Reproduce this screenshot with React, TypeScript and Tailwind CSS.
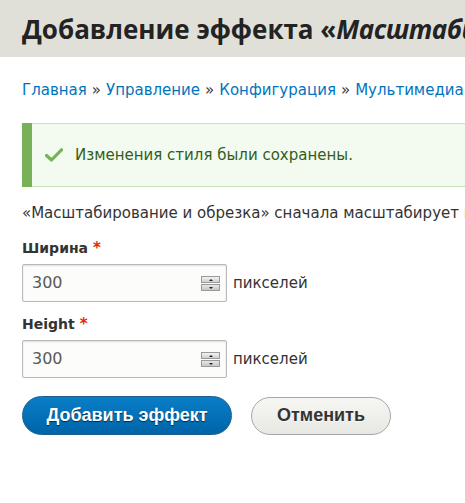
const body = "font-['DejaVu_Sans',sans-serif]";

function Spinner() {
  return (
    <div className="absolute left-[178px] top-[11px] flex h-[15px] w-[19px] flex-col gap-px">
      <div className="flex h-[7px] items-center justify-center border border-[#9a9a9a] bg-gradient-to-b from-[#f4f4f4] to-[#cfcfcf]">
        <div className="h-0 w-0 border-x-[2px] border-b-[2px] border-x-transparent border-b-[#222]" />
      </div>
      <div className="flex h-[7px] items-center justify-center border border-[#9a9a9a] bg-gradient-to-b from-[#e8e8e8] to-[#c6c6c6]">
        <div className="h-0 w-0 border-x-[2px] border-t-[2px] border-x-transparent border-t-[#222]" />
      </div>
    </div>
  );
}

function NumberField({ label }: { label: string }) {
  return (
    <div className="flex flex-col">
      <div className="flex h-[22px] items-center text-[14px] font-bold text-[#333]">
        {label}
        <span className="ml-[5px] text-[15px] text-[#e62600]">*</span>
      </div>
      <div className="mt-[5px] flex items-center">
        <div className="relative h-[38px] w-[205px] rounded-[2px] border border-[#b8b8b8] bg-[#fcfcfa] shadow-[inset_0_1px_2px_rgba(0,0,0,0.12)]">
          <div className="flex h-full items-center pl-[9px] text-[16px] text-[#595959]">300</div>
          <Spinner />
        </div>
        <span className="ml-[6px] text-[15px] text-[#333]">пикселей</span>
      </div>
    </div>
  );
}

export default function App() {
  return (
    <div className={`h-[503px] w-[465px] overflow-hidden bg-white ${body}`}>
      <header className="flex h-[57px] items-end overflow-hidden bg-[#e0e0d8] pb-[9px] pl-[22px]">
        <h1 className="whitespace-nowrap font-['Open_Sans',sans-serif] text-[26px] font-bold leading-[38px] text-[#232323]">
          Добавление эффекта «<em className="tracking-[-0.5px]">Масштабирование и обрезка</em>»
        </h1>
      </header>

      <main className="px-[22px]">
        <nav className="mt-[23px] flex h-[20px] items-center whitespace-nowrap text-[15px] text-[#0074bd]">
          Главная <span className="mx-[5px] text-[#333]">»</span> Управление{" "}
          <span className="mx-[5px] text-[#333]">»</span> Конфигурация{" "}
          <span className="mx-[5px] text-[#333]">»</span> Мультимедиа
        </nav>

        <div className="mt-[23px] flex h-[64px] w-[460px] items-center rounded-l-[2px] border border-l-0 border-[#c9e1bd] bg-[#f3faef]">
          <div className="h-[64px] w-[10px] shrink-0 bg-[#77b259]" />
          <svg className="ml-[13px] h-[14px] w-[18px]" viewBox="0 0 18 14">
            <path d="M1.5 7.5 L6.5 12 L16.5 1.8" fill="none" stroke="#77b259" strokeWidth="3.2" strokeLinecap="round" strokeLinejoin="round" />
          </svg>
          <span className="ml-[12px] whitespace-nowrap text-[15px] text-[#325e1c]">Изменения стиля были сохранены.</span>
        </div>

        <p className="mt-[16px] whitespace-nowrap text-[15px] leading-[20px] text-[#333]">
          «Масштабирование и обрезка» сначала масштабирует изображение
        </p>

        <div className="mt-[14px] flex flex-col gap-[11px]">
          <NumberField label="Ширина" />
          <NumberField label="Height" />
        </div>

        <div className="mt-[18px] flex items-center gap-[19px]">
          <button
            type="button"
            className="h-[39px] w-[210px] rounded-full border border-[#1e5c90] bg-gradient-to-b from-[#0a7ec7] to-[#0064a8] font-['Liberation_Sans',sans-serif] text-[18px] font-bold text-white [text-shadow:0_1px_1px_rgba(0,0,0,0.6)]"
          >
            Добавить эффект
          </button>
          <button
            type="button"
            className="h-[38px] w-[140px] rounded-full border border-[#a6a6a6] bg-gradient-to-b from-[#f6f6f3] to-[#e8e8e3] font-['Liberation_Sans',sans-serif] text-[18px] font-bold text-[#333] [text-shadow:0_1px_rgba(255,255,255,0.7)]"
          >
            Отменить
          </button>
        </div>
      </main>
    </div>
  );
}
